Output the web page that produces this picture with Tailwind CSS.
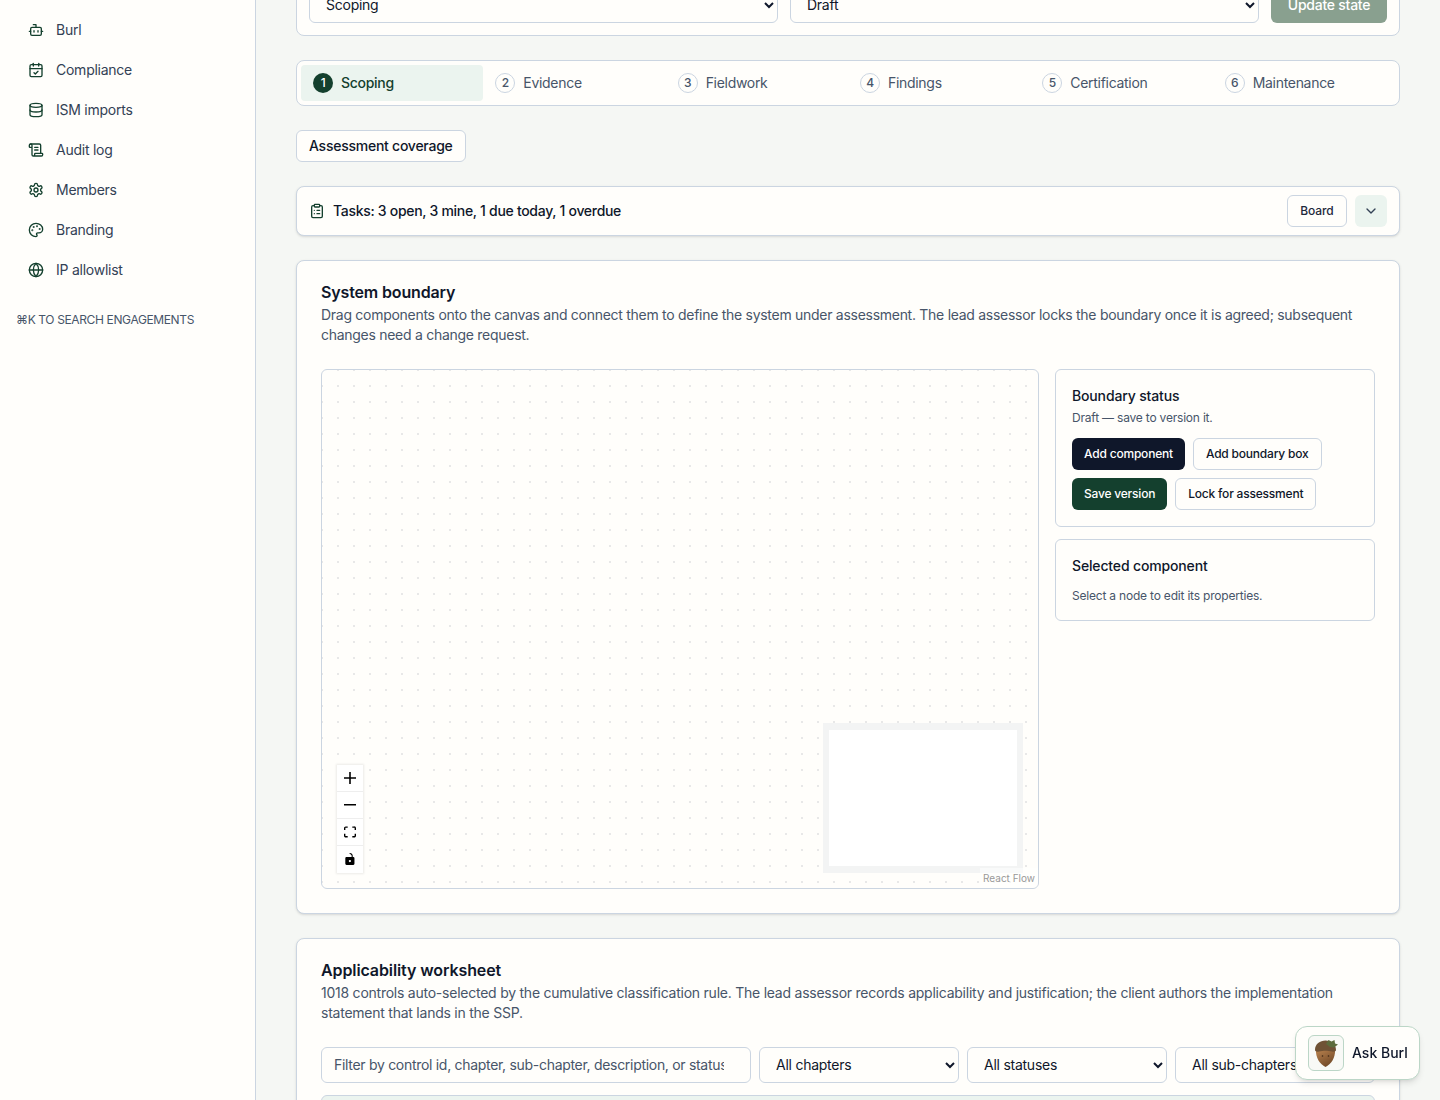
<!DOCTYPE html>
<html lang="en">
<head>
    <meta charset="UTF-8">
    <title>System boundary</title>
    <script src="https://cdn.jsdelivr.net/npm/@tailwindcss/browser@4"></script>
</head>
<body class="h-[1100px] overflow-hidden bg-[#f5f7f4] font-['Inter',sans-serif] text-sm tracking-[-0.25px] text-[#0f172a]">
    <div class="flex h-[1100px]">
        <!-- sidebar -->
        <aside class="w-[256px] shrink-0 border-r border-[#cbd5e1] bg-[#fffefb] px-4 pt-[10px]">
            <nav class="flex flex-col text-[#334155]">
                <a class="flex h-10 items-center gap-3 px-3">
                    <svg class="size-4 text-[#14402e]" viewBox="0 0 24 24" fill="none" stroke="currentColor" stroke-width="2" stroke-linecap="round" stroke-linejoin="round"><path d="M12 8V4H8"/><rect width="16" height="12" x="4" y="8" rx="2"/><path d="M2 14h2"/><path d="M20 14h2"/><path d="M15 13v2"/><path d="M9 13v2"/></svg>
                    Burl
                </a>
                <a class="flex h-10 items-center gap-3 px-3">
                    <svg class="size-4 text-[#14402e]" viewBox="0 0 24 24" fill="none" stroke="currentColor" stroke-width="2" stroke-linecap="round" stroke-linejoin="round"><path d="M8 2v4"/><path d="M16 2v4"/><rect width="18" height="18" x="3" y="4" rx="2"/><path d="M3 10h18"/><path d="m9 16 2 2 4-4"/></svg>
                    Compliance
                </a>
                <a class="flex h-10 items-center gap-3 px-3">
                    <svg class="size-4 text-[#14402e]" viewBox="0 0 24 24" fill="none" stroke="currentColor" stroke-width="2" stroke-linecap="round" stroke-linejoin="round"><ellipse cx="12" cy="5" rx="9" ry="3"/><path d="M3 5V19A9 3 0 0 0 21 19V5"/><path d="M3 12A9 3 0 0 0 21 12"/></svg>
                    ISM imports
                </a>
                <a class="flex h-10 items-center gap-3 px-3">
                    <svg class="size-4 text-[#14402e]" viewBox="0 0 24 24" fill="none" stroke="currentColor" stroke-width="2" stroke-linecap="round" stroke-linejoin="round"><path d="M15 12h-5"/><path d="M15 8h-5"/><path d="M19 17V5a2 2 0 0 0-2-2H4"/><path d="M8 21h12a2 2 0 0 0 2-2v-1a1 1 0 0 0-1-1H11a1 1 0 0 0-1 1v1a2 2 0 1 1-4 0V5a2 2 0 1 0-4 0v2a1 1 0 0 0 1 1h3"/></svg>
                    Audit log
                </a>
                <a class="flex h-10 items-center gap-3 px-3">
                    <svg class="size-4 text-[#14402e]" viewBox="0 0 24 24" fill="none" stroke="currentColor" stroke-width="2" stroke-linecap="round" stroke-linejoin="round"><path d="M12.22 2h-.44a2 2 0 0 0-2 2v.18a2 2 0 0 1-1 1.73l-.43.25a2 2 0 0 1-2 0l-.15-.08a2 2 0 0 0-2.73.73l-.22.38a2 2 0 0 0 .73 2.73l.15.1a2 2 0 0 1 1 1.72v.51a2 2 0 0 1-1 1.74l-.15.09a2 2 0 0 0-.73 2.73l.22.38a2 2 0 0 0 2.73.73l.15-.08a2 2 0 0 1 2 0l.43.25a2 2 0 0 1 1 1.73V20a2 2 0 0 0 2 2h.44a2 2 0 0 0 2-2v-.18a2 2 0 0 1 1-1.73l.43-.25a2 2 0 0 1 2 0l.15.08a2 2 0 0 0 2.73-.73l.22-.39a2 2 0 0 0-.73-2.73l-.15-.08a2 2 0 0 1-1-1.74v-.5a2 2 0 0 1 1-1.74l.15-.09a2 2 0 0 0 .73-2.73l-.22-.38a2 2 0 0 0-2.73-.73l-.15.08a2 2 0 0 1-2 0l-.43-.25a2 2 0 0 1-1-1.73V4a2 2 0 0 0-2-2z"/><circle cx="12" cy="12" r="3"/></svg>
                    Members
                </a>
                <a class="flex h-10 items-center gap-3 px-3">
                    <svg class="size-4 text-[#14402e]" viewBox="0 0 24 24" fill="none" stroke="currentColor" stroke-width="2" stroke-linecap="round" stroke-linejoin="round"><circle cx="13.5" cy="6.5" r=".5" fill="currentColor"/><circle cx="17.5" cy="10.5" r=".5" fill="currentColor"/><circle cx="8.5" cy="7.5" r=".5" fill="currentColor"/><circle cx="6.5" cy="12.5" r=".5" fill="currentColor"/><path d="M12 2C6.5 2 2 6.5 2 12s4.5 10 10 10c.926 0 1.648-.746 1.648-1.688 0-.437-.18-.835-.437-1.125-.29-.289-.438-.652-.438-1.125a1.64 1.64 0 0 1 1.668-1.668h1.996c3.051 0 5.555-2.503 5.555-5.554C21.965 6.012 17.461 2 12 2z"/></svg>
                    Branding
                </a>
                <a class="flex h-10 items-center gap-3 px-3">
                    <svg class="size-4 text-[#14402e]" viewBox="0 0 24 24" fill="none" stroke="currentColor" stroke-width="2" stroke-linecap="round" stroke-linejoin="round"><circle cx="12" cy="12" r="10"/><path d="M12 2a14.5 14.5 0 0 0 0 20 14.5 14.5 0 0 0 0-20"/><path d="M2 12h20"/></svg>
                    IP allowlist
                </a>
            </nav>
            <p class="mt-5 text-xs leading-5 tracking-[-0.37px] text-[#475569] uppercase">⌘K to search engagements</p>
        </aside>

        <!-- main column, scrolled down a little -->
        <main class="min-w-0 flex-1 px-10">
            <div class="-mt-[26px] flex flex-col gap-6">
                <section class="flex gap-3 rounded-lg border border-[#cbd5e1] bg-[#fffefb] p-3">
                    <select class="h-9 flex-1 rounded-md border border-[#cbd5e1] bg-[#fffefb] pr-4 pb-[2px] pl-3"><option>Scoping</option></select>
                    <select class="h-9 flex-1 rounded-md border border-[#cbd5e1] bg-[#fffefb] pr-4 pb-[2px] pl-3"><option>Draft</option></select>
                    <button class="h-9 w-[116px] rounded-md bg-[#89a08f] font-medium text-white">Update state</button>
                </section>

                <section class="grid h-[46px] grid-cols-6 rounded-lg border border-[#cbd5e1] bg-[#fffefb] p-1 tracking-[-0.3px] text-[#475569]">
                    <div class="flex items-center gap-2 rounded bg-[#ebf4ef] px-3 font-medium text-[#14402e]">
                        <span class="flex size-5 items-center justify-center rounded-full bg-[#14402e] text-xs text-white">1</span>Scoping
                    </div>
                    <div class="flex items-center gap-2 px-3">
                        <span class="flex size-5 items-center justify-center rounded-full border border-[#cbd5e1] text-xs font-medium">2</span>Evidence
                    </div>
                    <div class="flex items-center gap-2 px-3">
                        <span class="flex size-5 items-center justify-center rounded-full border border-[#cbd5e1] text-xs font-medium">3</span>Fieldwork
                    </div>
                    <div class="flex items-center gap-2 px-3">
                        <span class="flex size-5 items-center justify-center rounded-full border border-[#cbd5e1] text-xs font-medium">4</span>Findings
                    </div>
                    <div class="flex items-center gap-2 px-3">
                        <span class="flex size-5 items-center justify-center rounded-full border border-[#cbd5e1] text-xs font-medium">5</span>Certification
                    </div>
                    <div class="flex items-center gap-2 px-3">
                        <span class="flex size-5 items-center justify-center rounded-full border border-[#cbd5e1] text-xs font-medium">6</span>Maintenance
                    </div>
                </section>

                <div>
                    <button class="h-8 rounded-md border border-[#cbd5e1] bg-[#fffefb] px-3 font-medium">Assessment coverage</button>
                </div>

                <section class="flex h-[50px] items-center rounded-lg border border-[#cbd5e1] bg-[#fffefb] px-3 shadow-sm">
                    <svg class="mr-2 size-4 text-[#14402e]" viewBox="0 0 24 24" fill="none" stroke="currentColor" stroke-width="2" stroke-linecap="round" stroke-linejoin="round"><rect width="8" height="4" x="8" y="2" rx="1" ry="1"/><path d="M16 4h2a2 2 0 0 1 2 2v14a2 2 0 0 1-2 2H6a2 2 0 0 1-2-2V6a2 2 0 0 1 2-2h2"/><path d="M12 11h4"/><path d="M12 16h4"/><path d="M8 11h.01"/><path d="M8 16h.01"/></svg>
                    <span class="font-medium tracking-[-0.3px]">Tasks: 3 open, 3 mine, 1 due today, 1 overdue</span>
                    <button class="ml-auto h-8 w-[60px] rounded-md border border-[#cbd5e1] text-xs font-medium tracking-[-0.1px] text-[#1e293b]">Board</button>
                    <button class="ml-2 flex size-8 items-center justify-center rounded-md bg-[#ebf4ef] text-[#334155]">
                        <svg class="size-4" viewBox="0 0 24 24" fill="none" stroke="currentColor" stroke-width="2" stroke-linecap="round" stroke-linejoin="round"><path d="m6 9 6 6 6-6"/></svg>
                    </button>
                </section>

                <section class="rounded-lg border border-[#cbd5e1] bg-[#fffefb] p-6 shadow-sm">
                    <h2 class="text-base leading-[15px] font-semibold tracking-[-0.15px]">System boundary</h2>
                    <p class="mt-[5px] leading-5 tracking-[-0.28px] text-[#475569]">Drag components onto the canvas and connect them to define the system under assessment. The lead assessor locks the boundary once it is agreed; subsequent changes need a change request.</p>
                    <div class="mt-6 flex items-start gap-4">
                        <div class="relative h-[520px] w-[718px] shrink-0 overflow-hidden rounded-md border border-[#cbd5e1] bg-[#fffefb] bg-[radial-gradient(circle,#e8e8e8_1px,transparent_1.2px)] bg-[length:16px_16px] bg-position-[8px_8px]">
                            <!-- zoom controls -->
                            <div class="absolute bottom-[15px] left-[15px] flex w-[26px] flex-col bg-white shadow-[0_0_2px_1px_rgba(0,0,0,0.08)]">
                                <button class="flex h-[27px] items-center justify-center border-b border-[#eeeeee]">
                                    <svg class="size-3" viewBox="0 0 32 32"><path d="M32 18.133H18.133V32h-4.266V18.133H0v-4.266h13.867V0h4.266v13.867H32z"/></svg>
                                </button>
                                <button class="flex h-[27px] items-center justify-center border-b border-[#eeeeee]">
                                    <svg class="w-3" viewBox="0 0 32 5"><path d="M0 0h32v4.2H0z"/></svg>
                                </button>
                                <button class="flex h-[27px] items-center justify-center border-b border-[#eeeeee]">
                                    <svg class="size-3" viewBox="0 0 32 30"><path d="M3.692 4.63c0-.53.4-.938.939-.938h5.215V0H4.708C2.13 0 0 2.054 0 4.63v5.216h3.692V4.631zM27.354 0h-5.2v3.692h5.17c.53 0 .984.4.984.939v5.215H32V4.631A4.624 4.624 0 0027.354 0zm.954 24.83c0 .532-.4.94-.939.94h-5.215v3.768h5.215c2.577 0 4.631-2.13 4.631-4.707v-5.139h-3.692v5.139zm-23.677.94c-.531 0-.939-.4-.939-.94v-5.138H0v5.139c0 2.577 2.13 4.707 4.708 4.707h5.138V25.77H4.631z"/></svg>
                                </button>
                                <button class="flex h-[27px] items-center justify-center pb-[1px]">
                                    <svg class="size-3" viewBox="0 0 25 32"><path d="M21.333 10.667H19.81V7.619C19.81 3.429 16.38 0 12.19 0c-1.828 0-1.37 2.133.305 2.438 1.676.305 4.42 2.59 4.42 5.181v3.048H3.047A3.056 3.056 0 000 13.714v15.238A3.056 3.056 0 003.048 32h18.285a3.056 3.056 0 003.048-3.048V13.714a3.056 3.056 0 00-3.048-3.047zM12.19 24.533a3.056 3.056 0 01-3.047-3.047 3.056 3.056 0 013.047-3.048 3.056 3.056 0 013.048 3.048 3.056 3.056 0 01-3.048 3.047z"/></svg>
                                </button>
                            </div>
                            <!-- minimap -->
                            <div class="absolute right-[15px] bottom-[15px] h-[150px] w-[200px] bg-[#f3f4f4] px-[6px] py-[7px]">
                                <div class="h-full w-full bg-white"></div>
                            </div>
                            <span class="absolute right-0 bottom-0 bg-white/50 px-[3px] py-[4px] text-[10px] leading-[12px] tracking-normal text-[#999999]">React Flow</span>
                        </div>

                        <div class="flex min-w-0 flex-1 flex-col gap-3">
                            <div class="rounded-md border border-[#cbd5e1] p-4">
                                <h3 class="leading-5 font-medium tracking-[-0.15px]">Boundary status</h3>
                                <p class="mt-1 text-xs leading-4 tracking-[-0.2px] text-[#475569]">Draft — save to version it.</p>
                                <div class="mt-3 flex flex-col gap-2 text-xs font-medium tracking-[-0.2px]">
                                    <div class="flex gap-2">
                                        <button class="h-8 rounded-md bg-[#0f172a] px-3 text-white">Add component</button>
                                        <button class="h-8 rounded-md border border-[#cbd5e1] px-3">Add boundary box</button>
                                    </div>
                                    <div class="flex gap-2">
                                        <button class="h-8 rounded-md bg-[#14402e] px-3 text-white">Save version</button>
                                        <button class="h-8 rounded-md border border-[#cbd5e1] px-3">Lock for assessment</button>
                                    </div>
                                </div>
                            </div>
                            <div class="rounded-md border border-[#cbd5e1] p-4">
                                <h3 class="leading-5 font-medium tracking-[-0.15px]">Selected component</h3>
                                <p class="mt-3 text-xs leading-4 tracking-[-0.2px] text-[#475569]">Select a node to edit its properties.</p>
                            </div>
                        </div>
                    </div>
                </section>

                <section class="rounded-lg border border-[#cbd5e1] bg-[#fffefb] p-6 shadow-sm">
                    <h2 class="text-base leading-[15px] font-semibold tracking-[-0.1px]">Applicability worksheet</h2>
                    <p class="mt-[5px] leading-5 tracking-[-0.24px] text-[#475569]">1018 controls auto-selected by the cumulative classification rule. The lead assessor records applicability and justification; the client authors the implementation statement that lands in the SSP.</p>
                    <div class="mt-6 flex gap-2">
                        <input class="h-9 w-[430px] rounded-md border border-[#cbd5e1] bg-[#fffefb] pr-[26px] pb-[2px] pl-3 tracking-[-0.3px] placeholder:text-[#475569]" placeholder="Filter by control id, chapter, sub-chapter, description, or status">
                        <select class="h-9 w-[200px] rounded-md border border-[#cbd5e1] bg-[#fffefb] pr-4 pb-[2px] pl-3"><option>All chapters</option></select>
                        <select class="h-9 w-[200px] rounded-md border border-[#cbd5e1] bg-[#fffefb] pr-4 pb-[2px] pl-3"><option>All statuses</option></select>
                        <select class="h-9 w-[200px] rounded-md border border-[#cbd5e1] bg-[#fffefb] pr-4 pb-[2px] pl-3"><option>All sub-chapters</option></select>
                    </div>
                    <div class="mt-3 h-20 rounded-md border border-[#cbd5e1] bg-[#ebf4ef]"></div>
                </section>
            </div>
        </main>
    </div>

    <!-- floating helper -->
    <button class="fixed right-5 bottom-5 flex h-[54px] w-[125px] items-center gap-2 rounded-xl border border-[#bcd6c7] bg-[#fffefb] pl-3 font-medium tracking-normal shadow-md">
        <span class="flex size-9 items-center justify-center rounded-md border border-[#bcd6c7] bg-[#f8f9f6]">
            <svg class="size-7" viewBox="0 0 28 28">
                <defs>
                    <linearGradient id="nut" x1="0.2" y1="0" x2="0.8" y2="1"><stop offset="0" stop-color="#b27d4b"/><stop offset="1" stop-color="#6b4424"/></linearGradient>
                </defs>
                <path d="M4 11C3.500 19 8 25 13.500 28 19 25 23.500 19 23 11Z" fill="url(#nut)"/>
                <path d="M3 11C3 5 8 1.500 13.500 1.500 19 1.500 24 5 24 11 24 12.500 22 13 20 12.500 15 11.500 12 11.500 7 12.500 5 13 3 12.500 3 11Z" fill="#6f5235"/>
                <path d="M14 5l2.500-4 3 1.500 3-1.500 .5 3.500 3 1-4 3-4-.5z" fill="#5c6b3c"/>
                <circle cx="10.500" cy="17" r=".8" fill="#3d2513"/>
                <circle cx="16.500" cy="17" r=".8" fill="#3d2513"/>
            </svg>
        </span>
        Ask Burl
    </button>
</body>
</html>
